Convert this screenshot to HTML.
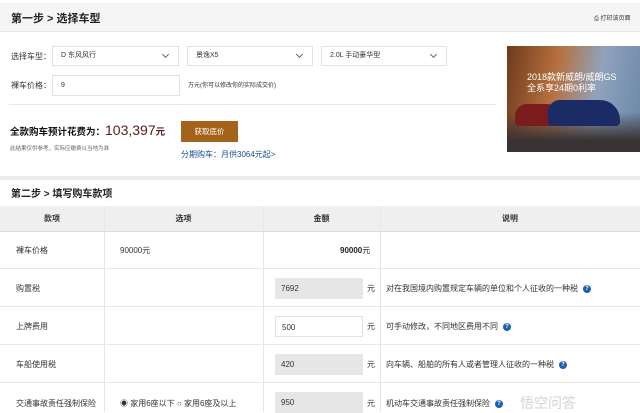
<!DOCTYPE html>
<html><head><meta charset="utf-8"><style>
*{margin:0;padding:0;box-sizing:border-box}
body{width:640px;height:412px;overflow:hidden;background:#fff;font-family:"Liberation Sans","Noto Sans CJK SC",sans-serif;color:#333;position:relative;font-size:8px}
.a{position:absolute}
.sel{position:absolute;top:46px;height:20px;border:1px solid #e2e2e2;background:#fff;font-size:7px;line-height:18px;padding-left:8px}
.sel:after{content:"";position:absolute;right:10px;top:5px;width:4px;height:4px;border-right:1px solid #666;border-bottom:1px solid #666;transform:rotate(45deg)}
.th{position:absolute;top:206px;height:26px;line-height:26px;text-align:center;font-weight:bold;font-size:8px;color:#333}
.row{position:absolute;left:0;width:640px;border-bottom:1px solid #e8e8e8}
.inp{position:absolute;width:88px;height:21px;line-height:21px;padding-left:6px;font-size:8px;background:#e6e6e6}
.q{display:inline-block;width:8px;height:8px;border-radius:50%;background:#1d5fb0;color:#fff;font-size:6px;line-height:8px;text-align:center;font-weight:bold;margin-left:5px;vertical-align:middle}
</style></head><body>
<div class="a" style="left:0;top:3px;width:640px;height:29px;background:#f5f5f5;border-bottom:1px solid #e6e6e6"></div>
<div class="a" style="left:11px;top:10px;font-size:11px;font-weight:bold;color:#222">第一步 &gt; 选择车型</div>
<div class="a" style="left:594px;top:13px;font-size:6px;color:#333">⎙ 打印该页面</div>
<div class="a" style="left:11px;top:51px;font-size:8px">选择车型：</div>
<div class="sel" style="left:52px;width:127px">D 东风风行</div>
<div class="sel" style="left:187px;width:126px">景逸X5</div>
<div class="sel" style="left:321px;width:126px">2.0L 手动豪华型</div>
<div class="a" style="left:11px;top:80px;font-size:8px">裸车价格：</div>
<div class="a" style="left:52px;top:75px;width:128px;height:21px;border:1px solid #e2e2e2;padding-left:8px;line-height:19px;font-size:7px">9</div>
<div class="a" style="left:188px;top:80px;font-size:6px">万元(你可以修改你的实际成交价)</div>
<div class="a" style="left:9px;top:104px;width:487px;height:1px;background:#e8e8e8"></div>
<div class="a" style="left:10px;top:122px;font-size:9.5px;font-weight:bold;color:#111;white-space:nowrap">全款购车预计花费为：<span style="font-weight:normal;font-size:14px;color:#5a1a1a">103,397</span><span style="color:#5a1a1a">元</span></div>
<div class="a" style="left:10px;top:144px;font-size:5.5px;color:#666">此结果仅供参考，实际应缴费以当地为准</div>
<div class="a" style="left:181px;top:121px;width:57px;height:21px;background:#a4621a;color:#fff;font-size:7.5px;line-height:21px;text-align:center">获取底价</div>
<div class="a" style="left:181px;top:149px;font-size:8px;color:#1a4f8f">分期购车：月供3064元起&gt;</div>
<div class="a" style="left:507px;top:46px;width:133px;height:106px;background:linear-gradient(100deg,#6e3a1c 0%,#b6703e 35%,#8fa3bd 65%,#6a86a8 100%)"></div>
<div class="a" style="left:507px;top:112px;width:133px;height:40px;background:linear-gradient(180deg,rgba(60,50,50,0) 0%,#3a3334 70%)"></div>
<div class="a" style="left:515px;top:104px;width:50px;height:22px;border-radius:12px 18px 4px 4px;background:#7a1b1e"></div>
<div class="a" style="left:548px;top:100px;width:72px;height:26px;border-radius:12px 20px 4px 4px;background:#1b2b66"></div>
<div class="a" style="left:527px;top:72px;font-size:9px;color:#fff;line-height:11px;white-space:nowrap">2018款新威朗/威朗GS<br>全系享24期0利率</div>
<div class="a" style="left:0;top:176px;width:640px;height:4px;background:#ececec"></div>
<div class="a" style="left:11px;top:185px;font-size:10px;font-weight:bold;color:#222">第二步 &gt; 填写购车款项</div>
<div class="a" style="left:0;top:206px;width:640px;height:26px;background:#efefef;border-bottom:1px solid #ddd"></div>
<div class="a" style="left:104px;top:206px;width:1px;height:206px;background:#e6e6e6"></div>
<div class="a" style="left:263px;top:206px;width:1px;height:206px;background:#e6e6e6"></div>
<div class="a" style="left:380px;top:206px;width:1px;height:206px;background:#e6e6e6"></div>
<div class="th" style="left:0;width:104px">款项</div>
<div class="th" style="left:104px;width:159px">选项</div>
<div class="th" style="left:263px;width:117px">金额</div>
<div class="th" style="left:380px;width:260px">说明</div>
<div class="row" style="top:232px;height:37px"></div>
<div class="row" style="top:269px;height:38px"></div>
<div class="row" style="top:307px;height:38px"></div>
<div class="row" style="top:345px;height:38px"></div>
<div class="a" style="left:16px;top:245px">裸车价格</div>
<div class="a" style="left:120px;top:245px">90000元</div>
<div class="a" style="left:340px;top:245px;color:#222"><b>90000</b>元</div>
<div class="a" style="left:16px;top:283px">购置税</div>
<div class="inp" style="left:275px;top:278px">7692</div>
<div class="a" style="left:367px;top:283px">元</div>
<div class="a" style="left:386px;top:283px">对在我国境内购置规定车辆的单位和个人征收的一种税<span class="q">?</span></div>
<div class="a" style="left:16px;top:321px">上牌费用</div>
<div class="inp" style="left:275px;top:316px;background:#fff;border:1px solid #e2e2e2">500</div>
<div class="a" style="left:367px;top:321px">元</div>
<div class="a" style="left:386px;top:321px">可手动修改，不同地区费用不同<span class="q">?</span></div>
<div class="a" style="left:16px;top:359px">车船使用税</div>
<div class="inp" style="left:275px;top:354px">420</div>
<div class="a" style="left:367px;top:359px">元</div>
<div class="a" style="left:386px;top:359px">向车辆、船舶的所有人或者管理人征收的一种税<span class="q">?</span></div>
<div class="a" style="left:16px;top:398px">交通事故责任强制保险</div>
<div class="a" style="left:120px;top:398px">◉ 家用6座以下 ○ 家用6座及以上</div>
<div class="inp" style="left:275px;top:392px">950</div>
<div class="a" style="left:367px;top:398px">元</div>
<div class="a" style="left:386px;top:398px">机动车交通事故责任强制保险<span class="q">?</span></div>
<div class="a" style="left:520px;top:393px;font-size:14px;color:rgba(200,200,200,0.8)">悟空问答</div>
</body></html>
